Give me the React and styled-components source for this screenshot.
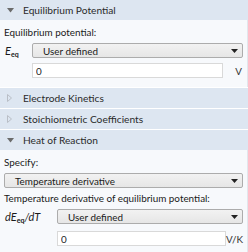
import React from 'react'
import styled, { createGlobalStyle } from 'styled-components'

const GlobalStyle = createGlobalStyle`
    html, body {
        margin: 0;
        padding: 0;
        background: #ffffff;
    }
    body {
        font-family: Lato, "Open Sans", sans-serif;
        font-size: 10px;
        color: #1a1a1a;
    }
`

function Caret({ open }) {
    return open ? (
        <svg width="7" height="5" viewBox="0 0 7 5">
            <path d="M0 0 H7 L3.5 4.5 Z" fill="#6b6b6b" />
        </svg>
    ) : (
        <svg width="5" height="8" viewBox="0 0 5 8">
            <path d="M0.5 0.5 L4.5 4 L0.5 7.5 Z" fill="none" stroke="#b9bec6" strokeWidth="1" />
        </svg>
    )
}

function Arrow() {
    return (
        <svg width="7" height="4" viewBox="0 0 7 4">
            <path d="M0 0 H7 L3.5 4 Z" fill="#222" />
        </svg>
    )
}

function Section({ title, open, children }) {
    return (
        <StSection>
            <StHeader>
                <StCaret>
                    <Caret open={open} />
                </StCaret>
                {title}
            </StHeader>
            {open && <StBody>{children}</StBody>}
        </StSection>
    )
}

function Select({ value }) {
    return (
        <StSelect>
            <span>{value}</span>
            <Arrow />
        </StSelect>
    )
}

function App() {
    return (
        <>
            <GlobalStyle />
            <StPanel>
                <Section title="Equilibrium Potential" open>
                    <StLabel>Equilibrium potential:</StLabel>
                    <StRow $label={28} $gap={5}>
                        <StSymbol>E<sub>eq</sub></StSymbol>
                        <Select value="User defined" />
                    </StRow>
                    <StRow $label={28} $gap={0}>
                        <span />
                        <StInputRow>
                            <StInput defaultValue="0" />
                            <StUnit $width={19}>V</StUnit>
                        </StInputRow>
                    </StRow>
                </Section>
                <Section title="Electrode Kinetics" />
                <Section title="Stoichiometric Coefficients" />
                <Section title="Heat of Reaction" open>
                    <StLabel>Specify:</StLabel>
                    <StRow $label={0} $gap={4}>
                        <Select value="Temperature derivative" />
                    </StRow>
                    <StLabel>Temperature derivative of equilibrium potential:</StLabel>
                    <StRow $label={53} $gap={7}>
                        <StSymbol>dE<sub>eq</sub>/dT</StSymbol>
                        <Select value="User defined" />
                    </StRow>
                    <StRow $label={53} $gap={0}>
                        <span />
                        <StInputRow>
                            <StInput defaultValue="0" />
                            <StUnit $width={16}>V/K</StUnit>
                        </StInputRow>
                    </StRow>
                </Section>
            </StPanel>
        </>
    )
}

export default App


const StPanel = styled.div`
    width: 248px;
    height: 252px;
    overflow: hidden;
    display: flex;
    flex-direction: column;
    gap: 1px;
    background: #ffffff;
`

const StSection = styled.div`
    display: flex;
    flex-direction: column;
`

const StHeader = styled.div`
    height: 20px;
    flex-shrink: 0;
    display: flex;
    align-items: center;
    background-color: #dde6f1;
    color: #2b2b2b;
    font-size: 10.2px;
    padding-left: 7px;
`

const StCaret = styled.span`
    width: 16px;
    display: flex;
    align-items: center;
`

const StBody = styled.div`
    background-color: #f7f9fc;
    border-right: 1px solid #e2e6ec;
    padding: 6px 4px 9px 4px;
    display: flex;
    flex-direction: column;
`

const StLabel = styled.div`
    font-size: 9.9px;
    line-height: 12px;
    margin-bottom: 5px;
    white-space: nowrap;
`

const StRow = styled.div`
    display: grid;
    grid-template-columns: ${(props) => (props.$label ? `${props.$label}px 1fr` : '1fr')};
    align-items: center;
    height: 15px;
    margin-bottom: ${(props) => props.$gap}px;
`

const StSymbol = styled.span`
    display: block;
    height: 15px;
    font-style: italic;
    font-size: 11px;
    line-height: 15px;
    padding-left: 1px;
    white-space: nowrap;
    sub {
        font-style: normal;
        font-weight: 700;
        font-size: 7px;
        vertical-align: -2px;
        line-height: 0;
    }
`

const StSelect = styled.div`
    height: 15px;
    box-sizing: border-box;
    border: 1px solid #acacac;
    border-radius: 2px;
    background: linear-gradient(#f2f2f2, #e6e6e6);
    display: flex;
    align-items: center;
    justify-content: space-between;
    padding: 0 4px 0 10px;
    font-size: 9.9px;
`

const StInputRow = styled.div`
    display: flex;
    align-items: center;
`

const StInput = styled.input`
    flex: 1;
    min-width: 0;
    height: 15px;
    box-sizing: border-box;
    border: 1px solid #d9d9d9;
    background: #fff;
    padding: 0 3px;
    font-family: Lato, sans-serif;
    font-size: 9.9px;
    color: #222;
    outline: none;
`

const StUnit = styled.span`
    width: ${(props) => props.$width}px;
    text-align: right;
    font-size: 9.9px;
    color: #333;
    margin-right: 1px;
`
